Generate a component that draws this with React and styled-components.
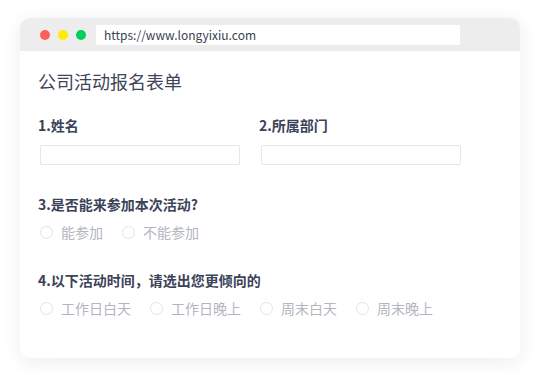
import React from 'react';
import styled, { createGlobalStyle } from 'styled-components';

const GlobalStyle = createGlobalStyle`
  html, body {
    margin: 0;
    padding: 0;
    background: #ffffff;
  }
  body {
    font-family: "Noto Sans CJK SC", "Noto Sans", sans-serif;
  }
`;

const Page = styled.div`
  width: 534px;
  height: 374px;
  padding: 18px 0 0 20px;
  box-sizing: border-box;
`;

const Window = styled.div`
  width: 500px;
  background: #ffffff;
  border-radius: 10px;
  overflow: hidden;
  box-shadow: 0 4px 20px rgba(30, 40, 60, 0.08);
`;

const TitleBar = styled.div`
  height: 33px;
  background: #ededed;
  display: flex;
  align-items: center;
  padding: 0 20px;
`;

const Dot = styled.span`
  width: 10px;
  height: 10px;
  border-radius: 50%;
  background: ${(p) => p.color};
  margin-right: 8px;
`;

const UrlBar = styled.div`
  width: 364px;
  height: 20px;
  margin-left: 2px;
  background: #ffffff;
  border-radius: 2px;
  display: flex;
  align-items: center;
  padding-left: 8px;
  box-sizing: border-box;
  font-size: 12px;
  color: #3a3f51;
`;

const Content = styled.div`
  padding: 18px 18px 40px 18px;
`;

const Heading = styled.h1`
  margin: 0;
  font-size: 18px;
  line-height: 24px;
  font-weight: 400;
  color: #3e4459;
`;

const FieldGrid = styled.div`
  display: grid;
  grid-template-columns: 221px 221px;
  margin-top: 22px;
`;

const Field = styled.div`
  display: flex;
  flex-direction: column;
`;

const Label = styled.div`
  font-size: 14px;
  line-height: 20px;
  font-weight: 600;
  color: #3c4358;
`;

const TextInput = styled.input`
  width: 200px;
  height: 20px;
  margin: 10px 0 0 2px;
  padding: 0 6px;
  box-sizing: border-box;
  border: 1px solid #e6e7ea;
  border-radius: 2px;
  background: #ffffff;
  outline: none;
`;

const Question = styled.div`
  margin-top: ${(p) => p.top}px;
`;

const Options = styled.div`
  display: flex;
  align-items: center;
  margin: 8px 0 0 2px;
`;

const Option = styled.label`
  display: flex;
  align-items: center;
  margin-right: 19px;
  font-size: 14px;
  line-height: 20px;
  color: #b3b6be;
`;

const Circle = styled.span`
  width: 13px;
  height: 13px;
  box-sizing: border-box;
  border: 1px solid #e2e3e6;
  border-radius: 50%;
  margin-right: 8px;
`;

const attend = ['能参加', '不能参加'];
const times = ['工作日白天', '工作日晚上', '周末白天', '周末晚上'];

function RadioGroup({ items }) {
  return (
    <Options>
      {items.map((t) => (
        <Option key={t}>
          <Circle />
          {t}
        </Option>
      ))}
    </Options>
  );
}

export default function App() {
  return (
    <Page>
      <GlobalStyle />
      <Window>
        <TitleBar>
          <Dot color="#ff5f5a" />
          <Dot color="#ffeb00" />
          <Dot color="#00cf5a" />
          <UrlBar>https://www.longyixiu.com</UrlBar>
        </TitleBar>
        <Content>
          <Heading>公司活动报名表单</Heading>
          <FieldGrid>
            <Field>
              <Label>1.姓名</Label>
              <TextInput />
            </Field>
            <Field>
              <Label>2.所属部门</Label>
              <TextInput />
            </Field>
          </FieldGrid>
          <Question top={29}>
            <Label>3.是否能来参加本次活动?</Label>
            <RadioGroup items={attend} />
          </Question>
          <Question top={28}>
            <Label>4.以下活动时间，请选出您更倾向的</Label>
            <RadioGroup items={times} />
          </Question>
        </Content>
      </Window>
    </Page>
  );
}
